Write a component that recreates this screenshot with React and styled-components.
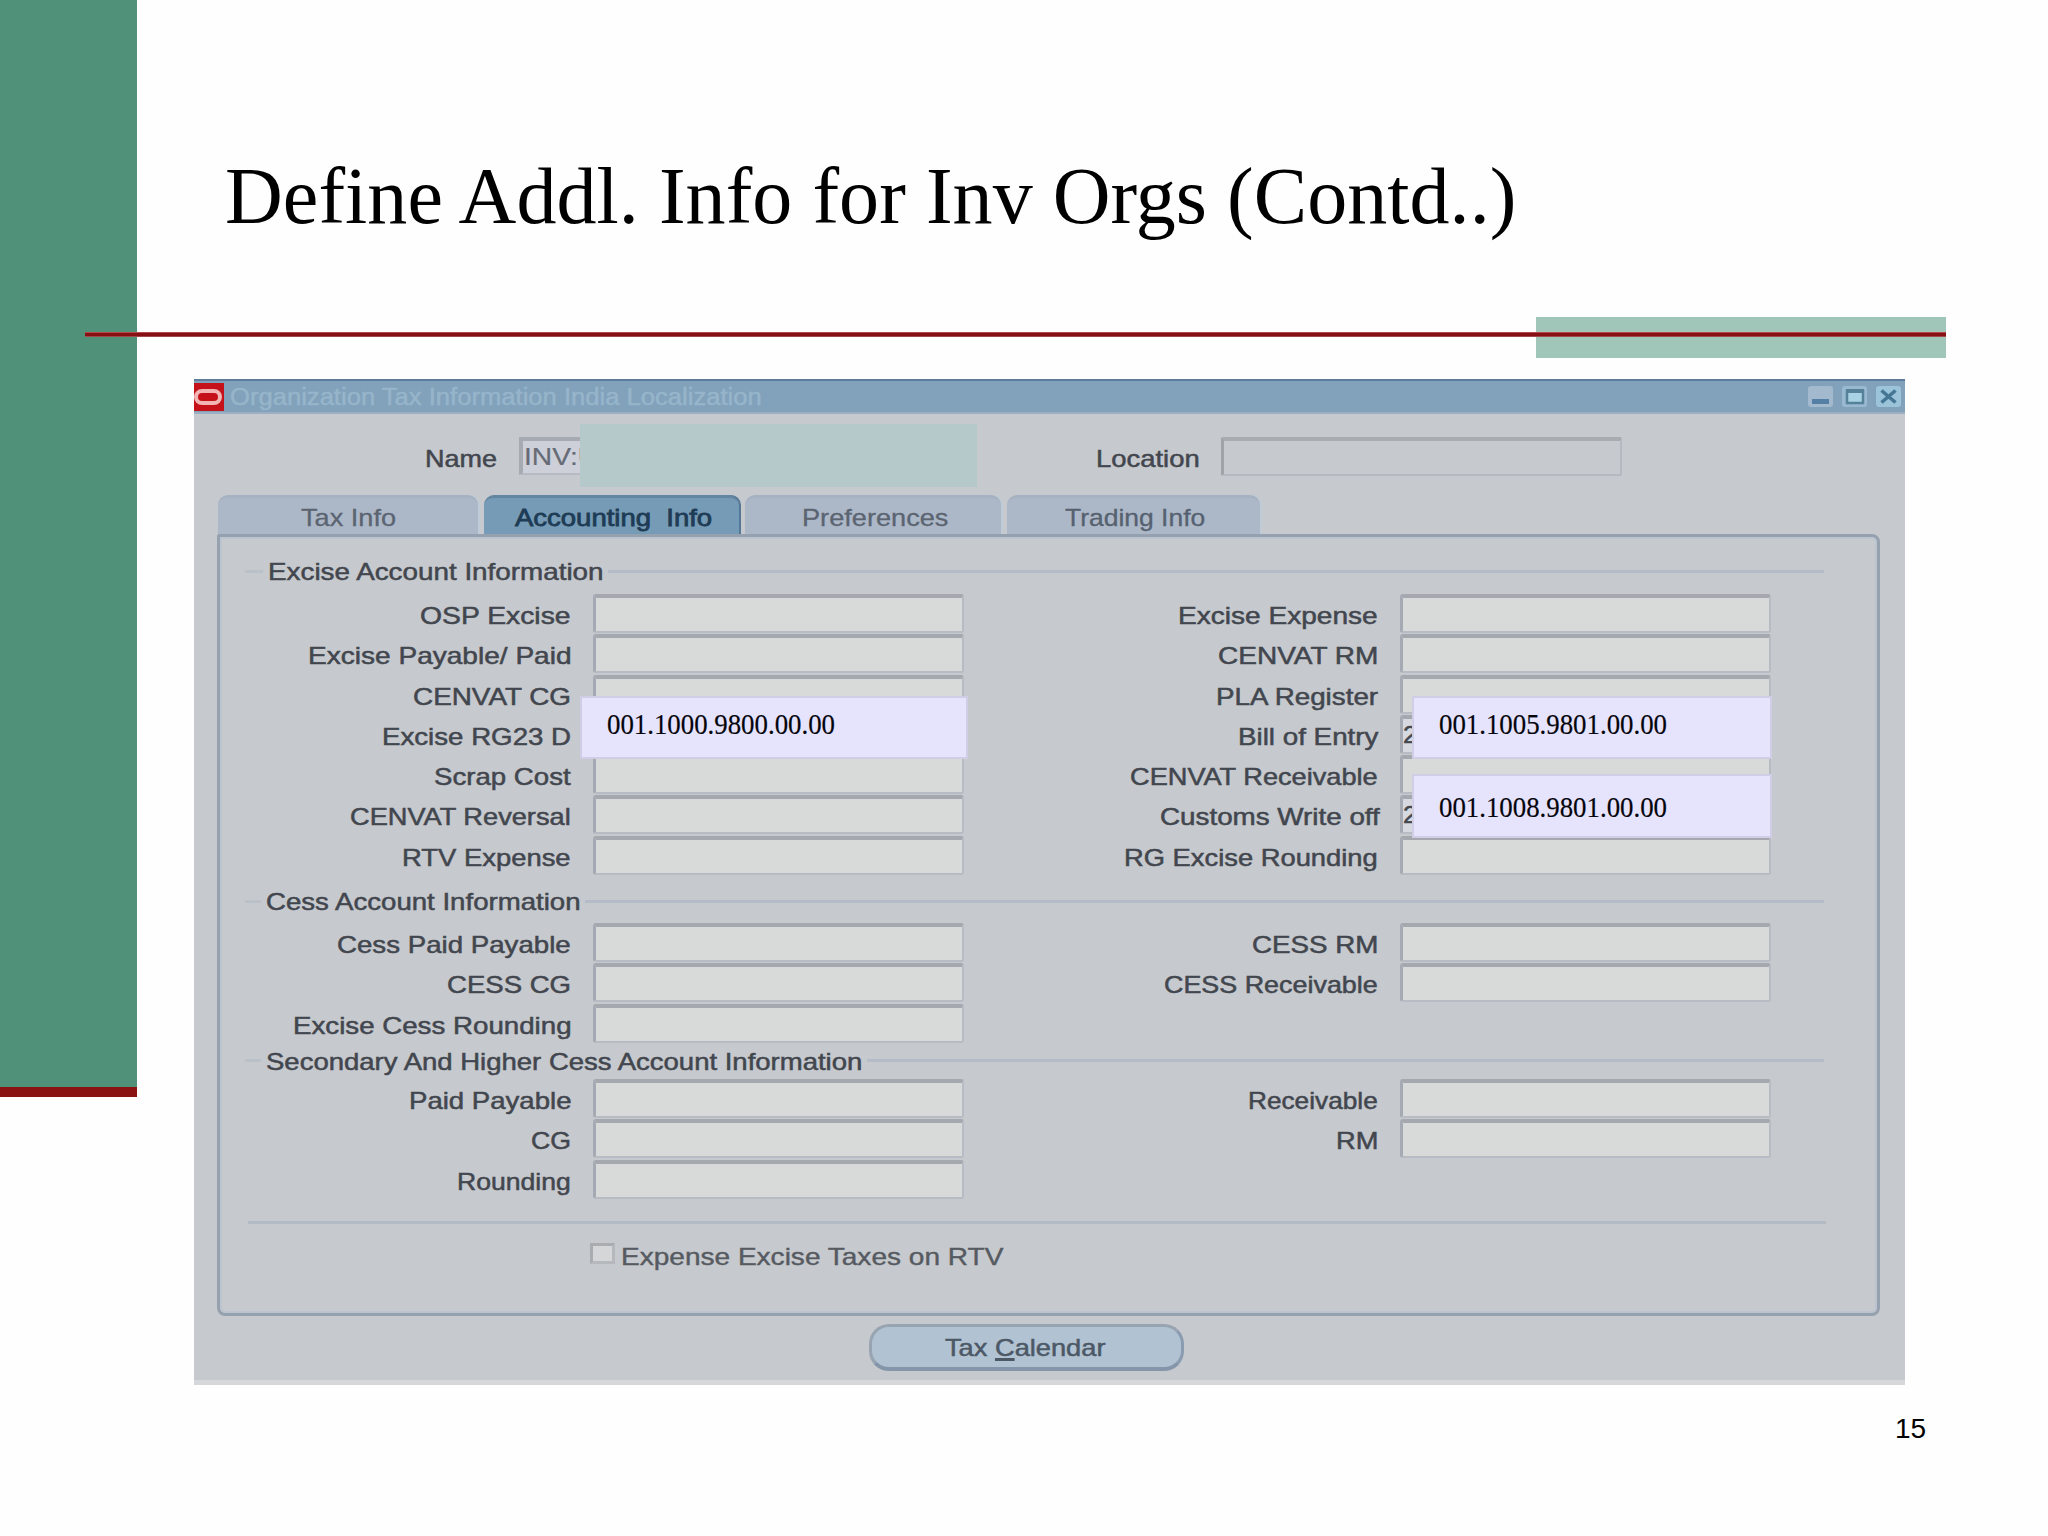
import React, { useLayoutEffect, useRef, useState } from "react";
import styled, { createGlobalStyle } from "styled-components";

const GlobalStyle = createGlobalStyle`
  * { box-sizing: border-box; }
  body { margin: 0; background: #fdfefd; }
`;

const sans = `"Liberation Sans", Arial, sans-serif`;
const serif = `"Liberation Serif", "Times New Roman", serif`;

const Slide = styled.div`
  width: 2048px;
  height: 1536px;
  display: flex;
  align-items: flex-start;
  overflow: hidden;
  background: #fdfefd;
`;

const SideBand = styled.div`
  flex: none;
  width: 137px;
  height: 1097px;
  background: #50917a;
  border-bottom: 10px solid #8a1412;
`;

const Main = styled.main`
  flex: 1;
  height: 100%;
  display: flex;
  flex-direction: column;
`;

const Header = styled.header`
  height: 317px;
  padding: 148px 0 0 88px;
`;

const Title = styled.h1`
  margin: 0;
  font: 400 80px/96px ${serif};
  letter-spacing: 0.05px;
  font-variant-ligatures: none;
  color: #000;
`;

const Divider = styled.div`
  position: relative;
  display: flex;
  justify-content: flex-end;
  width: 1861px;
  height: 41px;
  margin-left: -52px;
`;

const Accent = styled.div`
  width: 410px;
  background: #9fc6b8;
`;

const RedLine = styled.div`
  position: absolute;
  left: 0;
  right: 0;
  top: 15px;
  height: 5px;
  background: #861012;
  border-top: 1px solid #b3474a;
  border-bottom: 1px solid #a24a4a;
`;

const Window = styled.section`
  display: flex;
  flex-direction: column;
  width: 1711px;
  height: 1006px;
  margin: 21px 0 0 57px;
  background: #c6c9cd;
  border-bottom: 5px solid #d5d7da;
  font-family: ${sans};
`;

const TitleBar = styled.div`
  display: flex;
  align-items: center;
  height: 35px;
  padding-right: 3px;
  background: #82a1bb;
  border-top: 2px solid #5f7c9b;
  border-bottom: 2px solid #9db0c3;
`;

const Logo = styled.svg`
  flex: none;
  width: 30px;
  height: 28px;
`;

const Caption = styled.div`
  flex: 1;
  padding-left: 6px;
`;

const Controls = styled.div`
  display: flex;
  gap: 8px;
  svg { width: 26px; height: 22px; }
`;

const Filters = styled.div`
  display: flex;
  height: 81px;
  padding-top: 23px;
`;

const FilterLabel = styled.div`
  width: ${(p) => p.$w}px;
  padding: 8px ${(p) => p.$gap}px 0 0;
  text-align: right;
`;

const NameBox = styled.div`
  position: relative;
  width: 457px;
  height: 38px;
  padding: 2px 0 0 1px;
  border-top: 4px solid #a6aab1;
  border-left: 4px solid #a6aab1;
  border-bottom: 2px solid #b6bac2;
  background: #cdd0d8;
`;

const NameMask = styled.div`
  position: absolute;
  left: 57px;
  top: -17px;
  width: 397px;
  height: 63px;
  background: #b5c8ca;
`;

const LocationBox = styled.div`
  width: 401px;
  height: 39px;
  border: 2px solid #b5b9c1;
  border-top: 4px solid #a8abb0;
  border-left: 3px solid #a0a4a9;
  border-radius: 2px;
`;

const Tabs = styled.div`
  display: flex;
  gap: 6px;
  height: 39px;
  margin-left: 24px;
`;

const Tab = styled.div`
  width: ${(p) => p.$w}px;
  padding: 6px 0 0 ${(p) => p.$pad}px;
  border-radius: 10px 10px 0 0;
  background: ${(p) => (p.$active ? "#769bb6" : "#acb8c8")};
  border-top: 3px solid ${(p) => (p.$active ? "#6487a1" : "#a6b1c1")};
  box-shadow: 2px 0 0 ${(p) => (p.$active ? "#557896" : "#bfcbd7")};
`;

const Panel = styled.div`
  width: 1663px;
  height: 782px;
  margin-left: 23px;
  padding: 1px 0 0 1px;
  border: 3px solid #96a1af;
  border-radius: 2px 8px 8px 8px;
  box-shadow: inset 0 0 0 2px #bcc4d0;
`;

const Legend = styled.div`
  display: flex;
  align-items: center;
  height: 32px;
  margin: ${(p) => p.$top}px 53px 0 24px;
`;

const Rule = styled.div`
  flex: ${(p) => (p.$w ? "none" : "1")};
  width: ${(p) => p.$w || "auto"}px;
  height: 3px;
  background: ${(p) => (p.$w ? "#bbc1c9" : "#b5bcc8")};
`;

const LegendText = styled.div`
  padding: 2px 5px 0 5px;
`;

const Fields = styled.div`
  display: grid;
  grid-template-columns: 372px 371px 436px 371px;
  grid-auto-rows: 40.3px;
  margin-top: ${(p) => p.$top}px;
`;

const Label = styled.div`
  grid-column: ${(p) => p.$col};
  padding: 8px ${(p) => (p.$over ? 20 : 22)}px 0 0;
  text-align: right;
`;

const Cell = styled.div`
  grid-column: ${(p) => p.$col};
  position: relative;
`;

const Field = styled.div`
  height: 39px;
  padding: 2px 0 0 0;
  border: 2px solid #b7bbc4;
  border-top: 4px solid #a5a9af;
  border-left: 3px solid #a4a9b3;
  border-radius: 3px;
  background: ${(p) => (p.$filled ? "#d6d9e0" : "#d8d9d9")};
`;

const Account = styled.div`
  position: absolute;
  z-index: 1;
  left: ${(p) => p.$left}px;
  top: ${(p) => p.$top}px;
  width: ${(p) => p.$w}px;
  height: ${(p) => p.$h}px;
  padding: ${(p) => p.$pad}px 0 0 25px;
  background: #e6e3fd;
  box-shadow: 0 0 0 2px #d0cee6;
`;

const BottomRule = styled.div`
  height: 3px;
  margin: 21px 51px 0 27px;
  background: #b2bac4;
`;

const CheckRow = styled.div`
  display: flex;
  align-items: center;
  gap: 6px;
  margin: 19px 0 0 369px;
`;

const CheckBox = styled.div`
  width: 25px;
  height: 21px;
  margin-bottom: 6px;
  border: 3px solid #a9acb1;
  border-right-color: #b5b8bd;
  border-bottom-color: #b5b8bd;
  background: #d4d6d7;
`;

const Footer = styled.div`
  padding: 8px 0 0 675px;
`;

const Button = styled.div`
  width: 315px;
  height: 47px;
  padding: 7px 0 0 73px;
  border: 3px solid #98a4b2;
  border-bottom: 4px solid #8596aa;
  border-right-color: #8b9cb1;
  border-radius: 20px;
  background: #b1c3d3;
`;

const PageNumber = styled.div`
  margin: 28px 0 0 1758px;
  font: 28px/32px ${sans};
  color: #000;
`;

const TextBox = styled.span`
  display: inline-block;
  width: ${(p) => p.$w}px;
  text-align: left;
  white-space: pre;
`;

const TextRun = styled.span`
  display: inline-block;
  transform-origin: 0 50%;
  font-family: ${(p) => (p.$serif ? serif : sans)};
  font-size: ${(p) => p.$size}px;
  line-height: 28px;
  color: ${(p) => p.$color};
  -webkit-text-stroke: ${(p) => p.$stroke}px ${(p) => p.$color};
  u {
    text-underline-offset: 2px;
    text-decoration-thickness: 3px;
    text-decoration-skip-ink: none;
  }
`;

/* Stretches a run of text horizontally to the width of its box. */
function Text({ w, size = 24, color = "#42464e", stroke = 0.5, serif: isSerif, children }) {
  const ref = useRef(null);
  const [scale, setScale] = useState(1);
  useLayoutEffect(() => {
    setScale(w / ref.current.offsetWidth);
  }, [w, size]);
  return (
    <TextBox $w={w}>
      <TextRun
        ref={ref}
        $size={size}
        $color={color}
        $stroke={stroke}
        $serif={isSerif}
        style={{ transform: `scaleX(${scale})` }}
      >
        {children}
      </TextRun>
    </TextBox>
  );
}

const sections = [
  {
    title: "Excise Account Information",
    width: 335,
    stub: 18,
    legendTop: 17,
    fieldsTop: 7,
    rows: [
      [{ t: "OSP Excise", w: 151 }, { t: "Excise Expense", w: 200 }],
      [{ t: "Excise Payable/ Paid", w: 263 }, { t: "CENVAT RM", w: 160 }],
      [{ t: "CENVAT CG", w: 158 }, { t: "PLA Register", w: 162 }],
      [
        { t: "Excise RG23 D", w: 189, note: { v: "001.1000.9800.00.00", left: -11, top: -17, w: 384, h: 59, pad: 12 } },
        { t: "Bill of Entry", w: 140, v: "2", note: { v: "001.1005.9801.00.00", left: 14, top: -17, w: 356, h: 59, pad: 12 } },
      ],
      [{ t: "Scrap Cost", w: 137 }, { t: "CENVAT Receivable", w: 248 }],
      [
        { t: "CENVAT Reversal", w: 221 },
        { t: "Customs Write off", w: 220, over: true, v: "2", note: { v: "001.1008.9801.00.00", left: 14, top: -19, w: 356, h: 60, pad: 17 } },
      ],
      [{ t: "RTV Expense", w: 169 }, { t: "RG Excise Rounding", w: 254 }],
    ],
  },
  {
    title: "Cess Account Information",
    width: 314,
    stub: 16,
    legendTop: 9,
    fieldsTop: 6,
    rows: [
      [{ t: "Cess Paid Payable", w: 234 }, { t: "CESS RM", w: 126 }],
      [{ t: "CESS CG", w: 124 }, { t: "CESS Receivable", w: 214 }],
      [{ t: "Excise Cess Rounding", w: 278 }],
    ],
  },
  {
    title: "Secondary And Higher Cess Account Information",
    width: 596,
    stub: 16,
    legendTop: 1,
    fieldsTop: 2,
    rows: [
      [{ t: "Paid Payable", w: 162 }, { t: "Receivable", w: 130 }],
      [{ t: "CG", w: 40 }, { t: "RM", w: 42 }],
      [{ t: "Rounding", w: 114 }],
    ],
  },
];

function FormField({ item, col }) {
  return (
    <>
      <Label $col={col} $over={item.over}>
        <Text w={item.w}>{item.t}</Text>
      </Label>
      <Cell $col={col + 1}>
        <Field $filled={!!item.v}>{item.v && <Text w={14}>{item.v}</Text>}</Field>
        {item.note && (
          <Account $left={item.note.left} $top={item.note.top} $w={item.note.w} $h={item.note.h} $pad={item.note.pad}>
            <Text w={228} size={30} color="#05050c" stroke={0.2} serif>
              {item.note.v}
            </Text>
          </Account>
        )}
      </Cell>
    </>
  );
}

function WindowControls() {
  return (
    <Controls>
      <svg viewBox="0 0 26 22">
        <rect width="25" height="21" rx="3" fill="#a3bace" />
        <rect x="4" y="13" width="17" height="5" fill="#5580a6" />
      </svg>
      <svg viewBox="0 0 26 22">
        <rect width="25" height="21" rx="3" fill="#98b9d0" />
        <rect x="5" y="5" width="16" height="12" fill="#a9d3e4" stroke="#558199" strokeWidth="2.5" />
        <rect x="4" y="3" width="18" height="4" fill="#558199" />
      </svg>
      <svg viewBox="0 0 26 22">
        <rect width="25" height="21" rx="3" fill="#9bc3da" />
        <path d="M5.5 4.5L19.5 16.5M19.5 4.5L5.5 16.5" stroke="#457694" strokeWidth="3.6" />
      </svg>
    </Controls>
  );
}

export default function App() {
  return (
    <Slide>
      <GlobalStyle />
      <SideBand />
      <Main>
        <Header>
          <Title>Define Addl. Info for Inv Orgs (Contd..)</Title>
        </Header>
        <Divider>
          <Accent />
          <RedLine />
        </Divider>
        <Window>
          <TitleBar>
            <Logo viewBox="0 0 30 28">
              <rect width="30" height="28" fill="#c5121a" />
              <rect x="2" y="8" width="24" height="12" rx="6" fill="none" stroke="#f3b4b4" strokeWidth="4" />
            </Logo>
            <Caption>
              <Text w={532} size={23} color="#96b5ca">
                Organization Tax Information India Localization
              </Text>
            </Caption>
            <WindowControls />
          </TitleBar>
          <Filters>
            <FilterLabel $w={325} $gap={22}>
              <Text w={72}>Name</Text>
            </FilterLabel>
            <NameBox>
              <Text w={74} color="#666b76" stroke={0.2}>INV:U</Text>
              <NameMask />
            </NameBox>
            <FilterLabel $w={245} $gap={21}>
              <Text w={104}>Location</Text>
            </FilterLabel>
            <LocationBox />
          </Filters>
          <Tabs>
            <Tab $w={260} $pad={83}>
              <Text w={95} color="#5b6471" stroke={0.3}>Tax Info</Text>
            </Tab>
            <Tab $w={255} $pad={31} $active>
              <Text w={197} color="#1e3c55" stroke={0.8}>{"Accounting  Info"}</Text>
            </Tab>
            <Tab $w={256} $pad={57}>
              <Text w={146} color="#5b6471" stroke={0.3}>Preferences</Text>
            </Tab>
            <Tab $w={253} $pad={58}>
              <Text w={140} color="#56616f" stroke={0.3}>Trading Info</Text>
            </Tab>
          </Tabs>
          <Panel>
            {sections.map((s) => (
              <React.Fragment key={s.title}>
                <Legend $top={s.legendTop}>
                  <Rule $w={s.stub} />
                  <LegendText>
                    <Text w={s.width}>{s.title}</Text>
                  </LegendText>
                  <Rule />
                </Legend>
                <Fields $top={s.fieldsTop}>
                  {s.rows.map(([l, r]) => (
                    <React.Fragment key={l.t}>
                      <FormField item={l} col={1} />
                      {r && <FormField item={r} col={3} />}
                    </React.Fragment>
                  ))}
                </Fields>
              </React.Fragment>
            ))}
            <BottomRule />
            <CheckRow>
              <CheckBox />
              <Text w={382} color="#565a61" stroke={0.4}>Expense Excise Taxes on RTV</Text>
            </CheckRow>
          </Panel>
          <Footer>
            <Button>
              <Text w={160} color="#4c5866">
                Tax <u>C</u>alendar
              </Text>
            </Button>
          </Footer>
        </Window>
        <PageNumber>15</PageNumber>
      </Main>
    </Slide>
  );
}
